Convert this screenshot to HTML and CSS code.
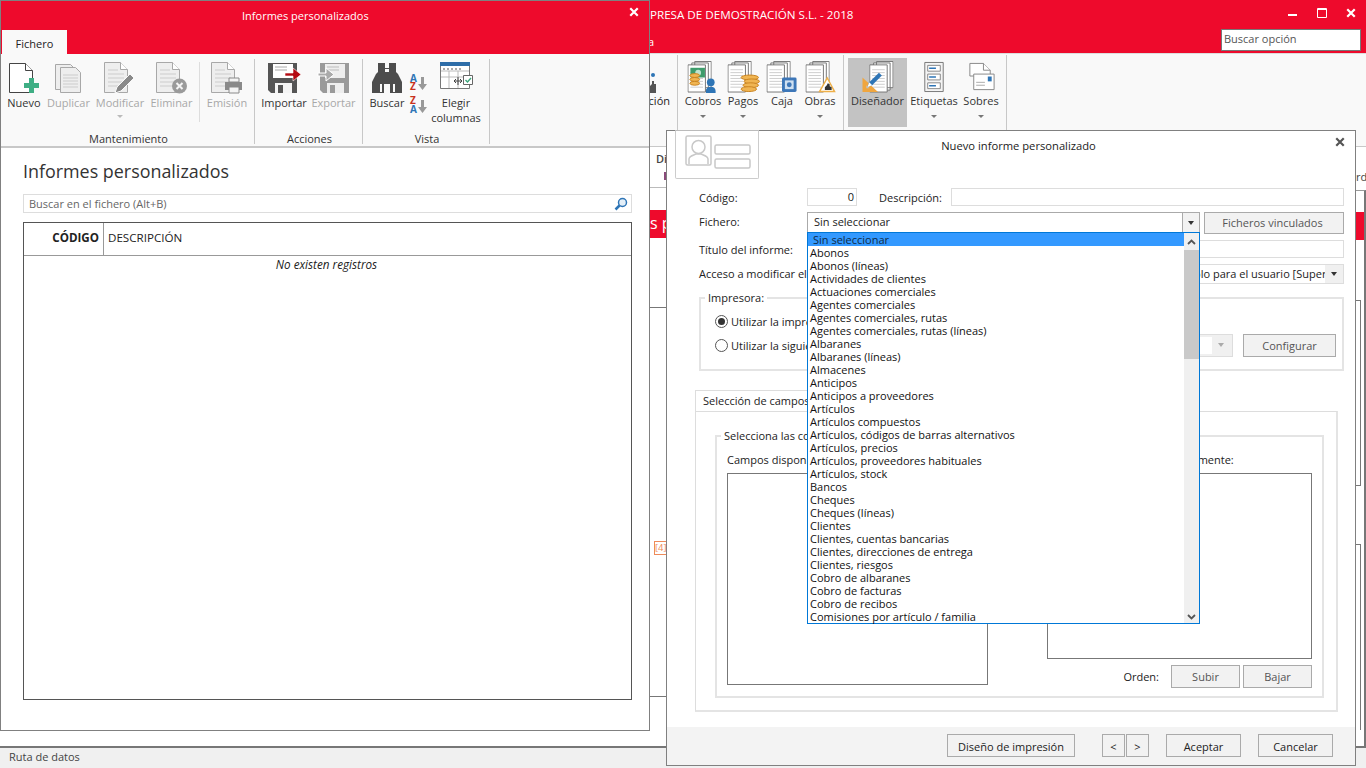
FILE: index.html
```html
<!DOCTYPE html>
<html lang="es">
<head>
    <meta charset="UTF-8">
    <meta name="viewport" content="width=device-width, initial-scale=1.0">
    <title>Informes personalizados</title>
    <link rel="stylesheet" href="styles.css">
</head>
<body>

    <!-- Shared icon parts -->
    <svg class="defs" width="0" height="0" aria-hidden="true">
        <symbol id="stack" viewBox="0 0 25 33">
            <path d="M7.5.5h17v27h-17zM4.5 2h17v28h-17z" fill="#fff" stroke="#777"/>
            <path d="M.5 4h18v28H.5z" fill="#fff" stroke="#777"/>
            <path d="M3 9h13M3 12h13M3 15h13M3 18h13M3 21h13M3 24h13M3 27h13" stroke="#ccc"/>
        </symbol>
        <symbol id="doc" viewBox="0 0 24 31">
            <path d="M.5.5h16l7 7v23H.5z" fill="#eee" stroke="#a8a8a8"/>
            <path d="M16.5.5v7h7" fill="#fff" stroke="#a8a8a8"/>
            <path d="M4 8h10M4 12h16M4 16h16M4 20h16M4 24h16" stroke="#ccc"/>
        </symbol>
        <symbol id="close" viewBox="0 0 12 12">
            <path d="M1.5 1.500l9 9M10.500 1.500l-9 9" fill="none" stroke="currentColor" stroke-width="2.600"/>
        </symbol>
    </svg>

    <!-- Main window, behind the other two -->
    <div class="app">
        <div class="app-top">
            <div class="app-title-row">
                <div class="app-title">EMPRESA DE DEMOSTRACIÓN S.L. - 2018</div>
                <div class="win-controls">
                    <svg class="ctl-min" width="10" height="2" viewBox="0 0 10 2"><path d="M0 0h9v2H0z" fill="#fff"/></svg>
                    <svg width="10" height="10" viewBox="0 0 10 10"><path d="M.5.5h9v9h-9zM.5 1.500h9" fill="none" stroke="#fff"/></svg>
                    <svg width="10" height="10"><use href="#close"/></svg>
                </div>
            </div>
            <div class="app-menu-row">
                <div class="app-menu">Ayuda</div>
                <div class="app-search">Buscar opción</div>
            </div>
        </div>

        <div class="app-ribbon">
            <div class="rgroup rg-hidden">
                <div class="rb-scrap">
                    <svg width="8" height="32" viewBox="0 0 8 32"><circle cx="3" cy="14" r="2" fill="#2e75b6"/><path d="M0 32v-7l2-2v-3h2v3h2v9z" fill="#555"/></svg>
                    <span>Facturación</span>
                </div>
            </div>
            <div class="rgroup rg-docs">
                <div class="rb">
                    <svg class="rb-ico" width="32" height="33" viewBox="0 0 32 33">
                        <use href="#stack" width="25" height="33"/>
                        <path d="M3 7h15v10H3z" fill="#3e9c6b"/><circle cx="11" cy="12" r="3" fill="#bfe3cf"/>
                        <ellipse cx="7.500" cy="15" rx="5" ry="2" fill="#f0b552" stroke="#c98320"/><ellipse cx="7.500" cy="19" rx="5" ry="2" fill="#f0b552" stroke="#c98320"/><ellipse cx="7.500" cy="23" rx="5" ry="2" fill="#f0b552" stroke="#c98320"/>
                        <circle cx="24" cy="22" r="4" fill="#2e75b6"/><path d="M19 33v-2c0-3 2-4.500 5-4.500s5 1.500 5 4.500v2z" fill="#2e75b6"/>
                    </svg>
                    <span>Cobros</span><i class="caret"></i>
                </div>
                <div class="rb">
                    <svg class="rb-ico" width="33" height="33" viewBox="0 0 33 33">
                        <use href="#stack" width="25" height="33"/>
                        <ellipse cx="23" cy="17" rx="9" ry="2.500" fill="#f0b552" stroke="#c98320"/><ellipse cx="25" cy="21" rx="8" ry="2.500" fill="#f0b552" stroke="#c98320"/><ellipse cx="24" cy="25" rx="8" ry="2.500" fill="#f0b552" stroke="#c98320"/><ellipse cx="22" cy="29" rx="8" ry="2.500" fill="#f0b552" stroke="#c98320"/>
                    </svg>
                    <span>Pagos</span><i class="caret"></i>
                </div>
                <div class="rb">
                    <svg class="rb-ico" width="32" height="33" viewBox="0 0 32 33">
                        <use href="#stack" width="25" height="33"/>
                        <rect x="16" y="17" width="15" height="15" rx="1.500" fill="#3d77b8"/><rect x="19" y="20" width="9" height="9" fill="#cfe0f1"/><circle cx="23.500" cy="24.500" r="2.500" fill="#3d77b8"/>
                    </svg>
                    <span>Caja</span>
                </div>
                <div class="rb">
                    <svg class="rb-ico" width="31" height="33" viewBox="0 0 31 33">
                        <use href="#stack" width="25" height="33"/>
                        <path d="M22.500 17.500l7.500 14H14.500z" fill="#fff" stroke="#eeb04a" stroke-width="1.500"/><path d="M20 30v-3l2-2 1-2 2 1v2l2 1v3z" fill="#333"/>
                    </svg>
                    <span>Obras</span><i class="caret"></i>
                </div>
            </div>
            <div class="rgroup rg-design">
                <div class="rb rb-active">
                    <svg class="rb-ico" width="33" height="33" viewBox="0 0 33 33">
                        <use href="#stack" x="8" width="25" height="33"/>
                        <path d="M1 17v15h16z" fill="#f0a63f"/><path d="M5 25v3h3z" fill="#c3c3c3"/>
                        <path d="M6 27l2-5 10-10 3 3-10 10z" fill="#2e75b6"/><path d="M6 27l2-5 3 3z" fill="#fff"/>
                    </svg>
                    <span>Diseñador</span>
                </div>
                <div class="rb">
                    <svg class="rb-ico" width="20" height="33" viewBox="0 0 20 33">
                        <path d="M.5 1.500h19v30H.5z" fill="#f4f4f4" stroke="#777"/>
                        <path d="M3.500 4.500h13v6h-13zM3.500 13.500h13v6h-13zM3.500 22.500h13v6h-13z" fill="#fff" stroke="#888"/>
                        <path d="M5 7.500h7M5 16.500h7M5 25.500h7" stroke="#2e75b6" stroke-width="1.500"/>
                    </svg>
                    <span>Etiquetas</span><i class="caret"></i>
                </div>
                <div class="rb">
                    <svg class="rb-ico" width="27" height="33" viewBox="0 0 27 33">
                        <path d="M1.500 2.500h14l7 7v6h-21z" fill="#fff" stroke="#888"/><path d="M15.500 2.500v7h7" fill="#fff" stroke="#888"/>
                        <path d="M5.500 13.500h21v16h-21z" fill="#fff" stroke="#888"/><path d="M8 22h9M8 25h9" stroke="#aaa"/><path d="M20 16h4v5h-4z" fill="#2e75b6"/>
                    </svg>
                    <span>Sobres</span><i class="caret"></i>
                </div>
            </div>
        </div>

        <div class="app-body">
            <div class="scrap-left">
                <div class="scrap-head">Di</div>
                <div class="scrap-mark"><i></i></div>
                <div class="scrap-banner">s p</div>
                <div class="scrap-panel">
                    <div class="scrap-tag">[4]</div>
                </div>
            </div>
            <div class="scrap-right">
                <div class="scrap-head">rd</div>
                <div class="scrap-box">
                    <div class="scrap-red"></div>
                    <div class="scrap-nest scrap-nest1"></div>
                    <div class="scrap-nest scrap-nest2"></div>
                </div>
            </div>
        </div>

        <div class="statusbar">Ruta de datos</div>
    </div>

    <!-- Informes personalizados window -->
    <div class="win-list">
        <div class="win-head">
            <div class="win-title-row">
                <div class="win-title">Informes personalizados</div>
                <svg class="win-close" width="10" height="10"><use href="#close"/></svg>
            </div>
            <div class="win-tab">Fichero</div>
        </div>

        <div class="ribbon">
            <div class="group g-mant">
                <div class="group-items">
                    <div class="rbtn">
                        <svg width="32" height="32" viewBox="0 0 32 32">
                            <path d="M1.500 1.500h16l7 7v22h-23z" fill="#fff" stroke="#444"/><path d="M17.500 1.500v7h7" fill="#fff" stroke="#444"/>
                            <path d="M22 18h5v5h5v5h-5v5h-5v-5h-5v-5h5z" transform="translate(-1 -2)" fill="#3fae84"/>
                        </svg>
                        <span>Nuevo</span>
                    </div>
                    <div class="rbtn off">
                        <svg width="27" height="32" viewBox="0 0 27 32">
                            <path d="M.5 2.500h15l5 5v20H.5z" fill="#eee" stroke="#a8a8a8"/>
                            <path d="M5.500 5.500h15l5 5v20h-20z" fill="#eee" stroke="#a8a8a8"/>
                            <path d="M8 13h15M8 16h15M8 19h15M8 22h15M8 25h15" stroke="#ccc"/>
                        </svg>
                        <span>Duplicar</span>
                    </div>
                    <div class="rbtn off">
                        <svg width="32" height="32" viewBox="0 0 32 32">
                            <use href="#doc" width="24" height="31"/>
                            <path d="M11 31l2-6 13-13 4 4-13 13z" fill="#8a8a8a" stroke="#f9f9f9"/>
                        </svg>
                        <span>Modificar</span><i class="caret off"></i>
                    </div>
                    <div class="rbtn off">
                        <svg width="32" height="32" viewBox="0 0 32 32">
                            <use href="#doc" width="24" height="31"/>
                            <circle cx="23.500" cy="24" r="7.500" fill="#9a9a9a"/>
                            <path d="M20.500 21l6 6M26.500 21l-6 6" stroke="#f4f4f4" stroke-width="2"/>
                        </svg>
                        <span>Eliminar</span>
                    </div>
                    <div class="rsep"></div>
                    <div class="rbtn off">
                        <svg width="32" height="32" viewBox="0 0 32 32">
                            <use href="#doc" width="24" height="31"/>
                            <path d="M18 16h10v4H18z" fill="#f4f4f4" stroke="#8a8a8a"/>
                            <path d="M14 20h17v8H14z" fill="#8a8a8a"/>
                            <path d="M18 25h10v6H18z" fill="#f4f4f4" stroke="#8a8a8a"/>
                        </svg>
                        <span>Emisión</span>
                    </div>
                </div>
                <div class="group-label">Mantenimiento</div>
            </div>

            <div class="group g-acc">
                <div class="group-items">
                    <div class="rbtn">
                        <svg width="33" height="32" viewBox="0 0 33 32">
                            <path d="M0 1h29v30H3l-3-3z" fill="#555"/><path d="M5 2h20v14H5z" fill="#fff"/>
                            <path d="M7 5h12M7 8h12" stroke="#aaa"/><path d="M7 21h17v10H7z" fill="#f4f4f4"/><path d="M10 23h5v8h-5z" fill="#555"/>
                            <path d="M17 11h8V6l8 6.500-8 6.500v-5h-8z" fill="#b40a12" stroke="#fff" stroke-width=".6"/>
                        </svg>
                        <span>Importar</span>
                    </div>
                    <div class="rbtn off">
                        <svg width="33" height="32" viewBox="0 0 33 32">
                            <path d="M3 1h29v30H6l-3-3z" fill="#9a9a9a"/><path d="M8 2h20v14H8z" fill="#eee"/>
                            <path d="M10 5h12M10 8h12" stroke="#bbb"/><path d="M10 21h17v10H10z" fill="#eee"/><path d="M13 23h5v8h-5z" fill="#9a9a9a"/>
                            <path d="M1 11h8V6l8 6.500-8 6.500v-5H1z" fill="#aaa" stroke="#fff"/>
                        </svg>
                        <span>Exportar</span>
                    </div>
                </div>
                <div class="group-label">Acciones</div>
            </div>

            <div class="group g-vista">
                <div class="group-items">
                    <div class="rbtn">
                        <svg width="30" height="32" viewBox="0 0 30 32">
                            <path d="M6 1h7v9h4V1h7v9l2 2 4 8v11H18v-9h-6v9H0V20l4-8 2-2z" fill="#4d4d4d"/>
                            <path d="M8 22h2v8H8zM21 22h2v8h-2z" fill="#f9f9f9"/>
                            <path d="M13 6h4v1h-4z" fill="#4d4d4d"/>
                        </svg>
                        <span>Buscar</span>
                    </div>
                    <div class="rsort">
                        <svg width="18" height="40" viewBox="0 0 18 40">
                            <text x="1" y="8" class="sort-a">A</text><text x="1" y="16" class="sort-z">Z</text>
                            <text x="1" y="30" class="sort-z">Z</text><text x="1" y="39" class="sort-a">A</text>
                            <path d="M12 3h3v7h3l-4.500 6-4.500-6h3zM12 26h3v7h3l-4.500 6-4.500-6h3z" fill="#999"/>
                        </svg>
                    </div>
                    <div class="rbtn">
                        <svg width="33" height="32" viewBox="0 0 33 32">
                            <path d="M.5.500h29v26H.5z" fill="#fff" stroke="#777"/><path d="M0 0h30v4H0z" fill="#2e6da8"/>
                            <path d="M1 9h28M1 15h28M9 9v17M18 9v17" stroke="#bbb" fill="none"/><path d="M3 7h2M7 7h2M11 7h2M15 7h2M19 7h2" stroke="#555"/>
                            <path d="M14 19h8M14 19l2-2M14 19l2 2M22 19l-2-2M22 19l-2 2M18 15v8" stroke="#444" fill="none"/>
                            <path d="M23.500 13.500h9v9h-9z" fill="#fff" stroke="#666"/><path d="M25.500 18l2 2 3.500-4" fill="none" stroke="#3aa57a" stroke-width="1.400"/>
                        </svg>
                        <span>Elegir<br>columnas</span>
                    </div>
                </div>
                <div class="group-label">Vista</div>
            </div>
        </div>

        <div class="win-content">
            <div class="win-heading">Informes personalizados</div>
            <div class="win-search">
                <span>Buscar en el fichero (Alt+B)</span>
                <svg width="14" height="14" viewBox="0 0 14 14"><circle cx="8.500" cy="5.500" r="4" fill="#e4eff8" stroke="#2e75b6" stroke-width="1.500"/><path d="M5.500 8.500L1.500 12.500" stroke="#2e75b6" stroke-width="2.500"/></svg>
            </div>
            <div class="grid">
                <div class="grid-head">
                    <div class="col-code">CÓDIGO</div>
                    <div class="col-desc">DESCRIPCIÓN</div>
                </div>
                <div class="grid-empty">No existen registros</div>
            </div>
        </div>
    </div>

    <!-- Nuevo informe personalizado dialog -->
    <div class="dlg">
        <div class="dlg-head">
            <div class="dlg-tab">
                <svg width="66" height="35" viewBox="0 0 66 35">
                    <rect x="1" y="1" width="25" height="29" rx="1.500" fill="#fff" stroke="#c8c8c8" stroke-width="1.500"/>
                    <circle cx="13.500" cy="12" r="6.500" fill="#fff" stroke="#c8c8c8" stroke-width="1.500"/>
                    <path d="M4 29v-5c0-3 5-4 7-5h5c2 1 7 2 7 5v5" fill="none" stroke="#c8c8c8" stroke-width="1.500"/>
                    <rect x="30" y="10" width="35" height="9" rx="1.500" fill="#fff" stroke="#c8c8c8" stroke-width="1.500"/>
                    <rect x="30" y="24" width="35" height="9" rx="1.500" fill="#fff" stroke="#c8c8c8" stroke-width="1.500"/>
                </svg>
            </div>
            <div class="dlg-title">Nuevo informe personalizado</div>
            <svg class="dlg-close" width="10" height="10"><use href="#close"/></svg>
        </div>

        <div class="form">
            <div class="frow r-code">
                <label class="flabel">Código:</label>
                <div class="input in-code">0</div>
                <label class="flabel-inline">Descripción:</label>
                <div class="input grow"></div>
            </div>
            <div class="frow r-file">
                <label class="flabel">Fichero:</label>
                <div class="combo-wrap">
                    <div class="combo">
                        <span>Sin seleccionar</span>
                        <div class="combo-btn"><i class="tri"></i></div>
                    </div>
                    <div class="dropdown">
                        <ul class="dropdown-list">
                            <li class="sel">Sin seleccionar</li>
                            <li>Abonos</li>
                            <li>Abonos (líneas)</li>
                            <li>Actividades de clientes</li>
                            <li>Actuaciones comerciales</li>
                            <li>Agentes comerciales</li>
                            <li>Agentes comerciales, rutas</li>
                            <li>Agentes comerciales, rutas (líneas)</li>
                            <li>Albaranes</li>
                            <li>Albaranes (líneas)</li>
                            <li>Almacenes</li>
                            <li>Anticipos</li>
                            <li>Anticipos a proveedores</li>
                            <li>Artículos</li>
                            <li>Artículos compuestos</li>
                            <li>Artículos, códigos de barras alternativos</li>
                            <li>Artículos, precios</li>
                            <li>Artículos, proveedores habituales</li>
                            <li>Artículos, stock</li>
                            <li>Bancos</li>
                            <li>Cheques</li>
                            <li>Cheques (líneas)</li>
                            <li>Clientes</li>
                            <li>Clientes, cuentas bancarias</li>
                            <li>Clientes, direcciones de entrega</li>
                            <li>Clientes, riesgos</li>
                            <li>Cobro de albaranes</li>
                            <li>Cobro de facturas</li>
                            <li>Cobro de recibos</li>
                            <li>Comisiones por artículo / familia</li>
                        </ul>
                        <div class="sbar">
                            <svg class="sbar-arrow" width="9" height="6" viewBox="0 0 9 6"><path d="M1 5l3.500-3.500L8 5" fill="none" stroke="#555" stroke-width="1.800"/></svg>
                            <div class="sbar-thumb"></div>
                            <svg class="sbar-arrow sbar-down" width="9" height="6" viewBox="0 0 9 6"><path d="M1 1l3.500 3.500L8 1" fill="none" stroke="#555" stroke-width="1.800"/></svg>
                        </div>
                    </div>
                </div>
                <div class="btn btn-linked">Ficheros vinculados</div>
            </div>
            <div class="frow r-title">
                <label class="flabel">Título del informe:</label>
                <div class="input grow"></div>
            </div>
            <div class="frow r-access">
                <label class="flabel flabel-wide">Acceso a modificar el informe:</label>
                <div class="combo-flat">
                    <span>Solo para el usuario [Supervisor]</span>
                    <div class="combo-flat-btn"><i class="tri"></i></div>
                </div>
            </div>

            <fieldset class="fset fset-printer">
                <legend>Impresora:</legend>
                <div class="radio-row">
                    <i class="radio on"></i><span>Utilizar la impresora predeterminada</span>
                </div>
                <div class="radio-row r2">
                    <i class="radio"></i><span>Utilizar la siguiente impresora:</span>
                    <div class="printer-combo"><div class="printer-field"></div><i class="tri tri-off"></i></div>
                    <div class="btn btn-config">Configurar</div>
                </div>
            </fieldset>
        </div>

        <div class="tabs">
            <div class="tab">Selección de campos</div>
            <div class="tab-panel">
                <fieldset class="fset fset-cols">
                    <legend>Selecciona las columnas</legend>
                    <div class="cols">
                        <div class="col-left">
                            <div class="col-cap">Campos disponibles:</div>
                            <div class="listbox lb-left"></div>
                        </div>
                        <div class="col-mid"><div class="btn btn-move"></div></div>
                        <div class="col-right">
                            <div class="col-cap">Campos a imprimir ordenadamente:</div>
                            <div class="listbox lb-right"></div>
                            <div class="order-row">
                                <span class="order-label">Orden:</span>
                                <div class="btn btn-order">Subir</div>
                                <div class="btn btn-order">Bajar</div>
                            </div>
                        </div>
                    </div>
                </fieldset>
            </div>
        </div>

        <div class="dlg-foot">
            <div class="btn btn-print">Diseño de impresión</div>
            <div class="btn btn-nav">&lt;</div>
            <div class="btn btn-nav btn-nav2">&gt;</div>
            <div class="btn btn-ok">Aceptar</div>
            <div class="btn btn-ok btn-cancel">Cancelar</div>
        </div>
    </div>

</body>
</html>
```

FILE: styles.css
```css
/* General */
html, body {
    margin: 0;
    padding: 0;
    height: 100%;
    overflow: hidden;
}
body {
    position: relative;
    width: 1366px;
    height: 768px;
    background-color: #fff;
    font-family: "Open Sans", "Noto Sans", sans-serif;
    font-size: 11px;
    line-height: 15px;
    color: #222;
}
.defs {
    position: absolute;
}
svg {
    display: block;
    flex: none;
}

/* Main window behind */
.app {
    display: flex;
    flex-direction: column;
    height: 768px;
}
.app-top {
    height: 53px;
    background-color: #ee0a2c;
    color: #fff;
}
.app-title-row {
    display: flex;
    justify-content: space-between;
    height: 29px;
    padding-left: 633px;
}
.app-title {
    padding-top: 7px;
    font-size: 11.65px;
}
.win-controls {
    display: flex;
    align-items: center;
    gap: 19px;
    padding: 0 10px 0 0;
    height: 26px;
}
.ctl-min {
    margin-top: 4px;
}
.app-menu-row {
    display: flex;
    justify-content: space-between;
}
.app-menu {
    width: 654px;
    text-align: right;
    padding-top: 5px;
}
.app-search {
    width: 136px;
    height: 20px;
    margin-right: 5px;
    padding-left: 2px;
    border: 1px solid #777;
    background-color: #fff;
    color: #555;
    line-height: 18px;
}

/* Main ribbon */
.app-ribbon {
    display: flex;
    height: 94px;
    padding-top: 1px;
    padding-left: 650px;
    box-sizing: border-box;
    background-color: #f9f9f9;
    border-bottom: 1px solid #c8c8c8;
    border-top: 1px solid #ddd;
}
.rgroup {
    display: flex;
    height: 89px;
    padding-top: 3px;
    box-sizing: border-box;
    border-right: 1px solid #c8c8c8;
}
.rg-hidden {
    width: 28px;
    justify-content: flex-end;
}
.rb-scrap {
    display: flex;
    flex-direction: column;
    align-items: flex-start;
    width: 20px;
    margin-right: 7px;
    padding-top: 3px;
    white-space: nowrap;
}
.rb-scrap span {
    direction: rtl;
    width: 20px;
    height: 15px;
}
.rg-docs {
    display: grid;
    grid-template-columns: 40px 40px 38px 38px;
    padding-left: 5px;
    width: 166px;
}
.rg-design {
    display: grid;
    grid-template-columns: 59px 54px 40px;
    grid-auto-rows: 69px;
    padding-left: 4px;
    width: 163px;
}
.rb {
    display: flex;
    flex-direction: column;
    align-items: center;
    height: 69px;
    padding-top: 3px;
    box-sizing: border-box;
    color: #333;
}
.rb-ico {
    height: 32px;
}
.rb-active {
    background-color: #c3c3c3;
}
.caret {
    display: block;
    width: 0;
    height: 0;
    margin-top: 7px;
    border-left: 3.5px solid transparent;
    border-right: 3.5px solid transparent;
    border-top: 3px solid #777;
}
.caret.off {
    border-top-color: #bbb;
}

/* Bits of the document still visible beside the dialog */
.app-body {
    display: flex;
    justify-content: space-between;
    flex: 1;
    padding-left: 650px;
    min-height: 0;
}
.scrap-left {
    width: 16px;
    overflow: hidden;
}
.scrap-right {
    width: 10px;
    overflow: hidden;
}
.scrap-head {
    height: 27px;
    padding: 4px 0 0 6px;
    box-sizing: border-box;
    font-weight: 600;
    color: #444;
    white-space: nowrap;
}
.scrap-right .scrap-head {
    height: 43px;
    padding: 22px 0 0 0;
    font-weight: 400;
}
.scrap-mark {
    height: 16px;
    box-sizing: border-box;
    border-bottom: 1px solid #bbb;
}
.scrap-mark i {
    display: block;
    width: 2px;
    height: 8px;
    margin: -2px 0 0 14px;
    background-color: #8a4a7a;
}
.scrap-banner {
    height: 28px;
    margin-top: 22px;
    padding-top: 1px;
    box-sizing: border-box;
    background-color: #ee0a2c;
    color: #fff;
    font-size: 16px;
    line-height: 24px;
    white-space: nowrap;
}
.scrap-panel {
    height: 390px;
    margin-top: 69px;
    padding-top: 233px;
    box-sizing: border-box;
    border-top: 1px solid #777;
    border-bottom: 1px solid #777;
}
.scrap-tag {
    margin-left: 4px;
    width: 13px;
    height: 14px;
    line-height: 12px;
    font-size: 9.5px;
    border: 1px solid #ee8a5a;
    color: #ee8a5a;
    box-sizing: border-box;
    white-space: nowrap;
}
.scrap-box {
    height: 556px;
    width: 10px;
    box-sizing: border-box;
    padding-top: 21px;
    border-top: 1px solid #999;
    border-right: 2px solid #777;
}
.scrap-red {
    height: 28px;
    background-color: #ee0a2c;
}
.scrap-nest {
    width: 5px;
    box-sizing: border-box;
    border: 1px solid #777;
    border-left: 0;
}
.scrap-nest1 {
    height: 186px;
    margin-top: 60px;
}
.scrap-nest2 {
    height: 186px;
    margin-top: 58px;
    border-bottom: 0;
}
.statusbar {
    height: 22px;
    padding-left: 9px;
    box-sizing: border-box;
    border-top: 2px solid #777;
    background-color: #f0f0f0;
    color: #444;
    line-height: 18px;
}

/* Informes personalizados window */
.win-list {
    position: absolute;
    left: 0;
    top: 0;
    width: 650px;
    height: 731px;
    box-sizing: border-box;
    border: 1px solid #808080;
    background-color: #fff;
}
.win-head {
    height: 53px;
    background-color: #ee0a2c;
    color: #fff;
}
.win-title-row {
    display: flex;
    justify-content: space-between;
    height: 29px;
}
.win-title {
    padding: 7px 0 0 241px;
}
.win-close {
    margin: 6px 10px 0 0;
}
.win-tab {
    width: 65px;
    height: 24px;
    margin-left: 1px;
    box-sizing: border-box;
    background-color: #f9f9f9;
    color: #222;
    text-align: center;
    line-height: 27px;
}

/* Ribbon of the window */
.ribbon {
    display: flex;
    height: 94px;
    padding-top: 5px;
    box-sizing: border-box;
    background-color: #f9f9f9;
    border-bottom: 2px solid #c8c8c8;
}
.group {
    display: flex;
    flex-direction: column;
    justify-content: space-between;
    height: 85px;
    box-sizing: border-box;
    border-right: 1px solid #c8c8c8;
}
.g-mant {
    width: 254px;
}
.g-acc {
    width: 108px;
}
.g-vista {
    width: 127px;
}
.group-items {
    display: grid;
    align-items: start;
    padding-top: 3px;
}
.g-mant .group-items {
    grid-template-columns: 46px 43px 60px 43px 12px 44px;
}
.g-acc .group-items {
    grid-template-columns: 58px 41px;
}
.g-vista .group-items {
    grid-template-columns: 48px 14px 62px;
}
.group-label {
    margin: 0 -2px -2px 0;
    text-align: center;
    color: #333;
}
.rbtn {
    display: flex;
    flex-direction: column;
    align-items: center;
    text-align: center;
    color: #333;
    white-space: nowrap;
}
.rbtn svg {
    height: 32px;
}
.rbtn span {
    margin-top: 1px;
}
.rbtn .caret {
    margin-top: 5px;
}
.rbtn.off {
    color: #a8a8a8;
}
.rsep {
    width: 1px;
    height: 60px;
    margin: 0 auto;
    background-color: #ddd;
}
.rsort {
    display: flex;
    justify-content: center;
    padding-top: 12px;
    margin: 0 -4px;
}
.sort-a, .sort-z {
    font-size: 10px;
    font-weight: 700;
}
.sort-a {
    fill: #2e75b6;
}
.sort-z {
    fill: #c8321e;
}

/* Window content */
.win-content {
    padding: 5px 17px 0 22px;
}
.win-heading {
    font-size: 17.9px;
    line-height: 36px;
    color: #333;
}
.win-search {
    display: flex;
    justify-content: space-between;
    align-items: center;
    height: 19px;
    margin-top: 5px;
    padding: 0 3px 0 5px;
    box-sizing: border-box;
    border: 1px solid #ddd;
    color: #666;
}
.grid {
    height: 478px;
    margin-top: 9px;
    box-sizing: border-box;
    border: 1px solid #555;
}
.grid-head {
    display: flex;
    height: 32px;
    border-bottom: 1px solid #999;
    line-height: 30px;
    font-size: 11.6px;
}
.col-code {
    width: 75px;
    padding-right: 4px;
    text-align: right;
    font-weight: 700;
    border-right: 1px solid #999;
}
.col-desc {
    padding-left: 4px;
}
.grid-empty {
    padding-top: 1px;
    text-align: center;
    font-style: italic;
    font-size: 11.7px;
    margin-left: -2px;
}

/* Dialog */
.dlg {
    position: absolute;
    left: 666px;
    top: 130px;
    width: 690px;
    height: 636px;
    box-sizing: border-box;
    border: 1px solid #808080;
    background-color: #fff;
    display: flex;
    flex-direction: column;
}
.dlg-head {
    display: flex;
    height: 57px;
    flex: none;
}
.dlg-tab {
    width: 84px;
    height: 49px;
    margin: -1px 0 0 8px;
    padding: 4px 0 0 9px;
    box-sizing: border-box;
    border: 1px solid #ccc;
    border-top: 1px solid #bbb;
    border-radius: 0 0 2px 2px;
}
.dlg-title {
    width: 519px;
    padding-top: 7px;
    text-align: center;
    font-size: 11.2px;
}
.dlg-close {
    margin: 6px 0 0 57px;
    color: #555;
}

/* Form */
.form {
    padding: 0 11px 0 32px;
}
.frow {
    display: flex;
    align-items: flex-start;
    line-height: 18px;
}
.r-code {
    height: 18px;
}
.r-file {
    height: 22px;
    margin-top: 6px;
}
.r-title {
    height: 18px;
    margin-top: 6px;
}
.r-access {
    height: 20px;
    margin-top: 6px;
}
.flabel {
    width: 108px;
    flex: none;
    padding-top: 1px;
    white-space: nowrap;
}
.flabel-wide {
    width: 485px;
    line-height: 20px;
    padding-top: 0;
}
.flabel-inline {
    padding: 1px 9px 0 22px;
    white-space: nowrap;
}
.input {
    height: 18px;
    box-sizing: border-box;
    border: 1px solid #ddd;
    background-color: #fff;
    line-height: 15px;
}
.in-code {
    width: 50px;
    flex: none;
    padding-right: 2px;
    text-align: right;
}
.grow {
    flex: 1;
}
.combo-wrap {
    position: relative;
    width: 393px;
    flex: none;
}
.combo {
    display: flex;
    justify-content: space-between;
    height: 21px;
    padding-left: 6px;
    box-sizing: border-box;
    border: 1px solid #aaa;
    line-height: 17px;
}
.combo-btn {
    display: flex;
    align-items: center;
    justify-content: center;
    width: 16px;
    border-left: 1px solid #aaa;
    background-color: #f2f2f2;
}
.tri {
    display: block;
    width: 0;
    height: 0;
    border-left: 3.5px solid transparent;
    border-right: 3.5px solid transparent;
    border-top: 4px solid #333;
}
.tri-off {
    border-top-color: #aaa;
}

/* Dropdown over the form */
.dropdown {
    position: absolute;
    left: 0;
    top: 20px;
    z-index: 2;
    display: flex;
    width: 393px;
    height: 392px;
    box-sizing: border-box;
    border: 1px solid #0078d7;
    background-color: #fff;
}
.dropdown-list {
    flex: 1;
    margin: 0;
    padding: 0;
    list-style: none;
    line-height: 13px;
    color: #111;
}
.dropdown-list li {
    height: 13px;
    padding-left: 2px;
    white-space: nowrap;
}
.dropdown-list li.sel {
    padding-left: 5px;
    background-color: #3399ff;
    color: #102a45;
}
.sbar {
    display: flex;
    flex-direction: column;
    align-items: center;
    width: 15px;
    background-color: #f0f0f0;
}
.sbar-arrow {
    margin-top: 6px;
}
.sbar-thumb {
    width: 15px;
    height: 109px;
    margin-top: 5px;
    background-color: #c9c9c9;
}
.sbar-down {
    margin-top: auto;
    margin-bottom: 3px;
}

.btn {
    flex: none;
    box-sizing: border-box;
    border: 1px solid #aaa;
    background-color: #f2f2f2;
    text-align: center;
    color: #555;
}
.btn-linked {
    width: 140px;
    height: 22px;
    margin-left: 4px;
    padding-right: 3px;
    line-height: 20px;
}
.combo-flat {
    display: flex;
    justify-content: space-between;
    flex: 1;
    height: 20px;
    border: 1px solid #ddd;
    box-sizing: border-box;
    line-height: 18px;
    white-space: nowrap;
    color: #222;
    min-width: 0;
}
.combo-flat span {
    overflow: hidden;
    flex: 1;
    padding-left: 3px;
}
.combo-flat-btn {
    display: flex;
    flex: none;
    align-items: center;
    justify-content: center;
    width: 18px;
    background-color: #f0f0f0;
}

/* Group boxes */
.fset {
    margin: 0;
    padding: 0;
    border: 2px solid #e4e4e4;
    border-radius: 0;
    min-width: 0;
}
.fset legend {
    padding: 0 3px;
    line-height: 14px;
}
.fset-printer {
    margin-top: 7px;
    height: 80px;
    box-sizing: border-box;
    padding: 4px 6px 0 14px;
}
.fset-printer legend {
    margin-left: -10px;
}
.radio-row {
    display: flex;
    align-items: center;
    gap: 3px;
    height: 24px;
}
.radio {
    position: relative;
    display: block;
    width: 13px;
    height: 13px;
    box-sizing: border-box;
    border: 1px solid #555;
    border-radius: 50%;
}
.radio.on::after {
    content: "";
    position: absolute;
    left: 2px;
    top: 2px;
    width: 7px;
    height: 7px;
    border-radius: 50%;
    background-color: #333;
}
.printer-combo {
    display: flex;
    align-items: center;
    margin-left: auto;
    width: 150px;
    height: 23px;
    box-sizing: border-box;
    border: 1px solid #ddd;
    background-color: #f0f0f0;
}
.printer-field {
    width: 128px;
    height: 17px;
    margin-right: 6px;
    background-color: #fff;
}
.btn-config {
    width: 93px;
    height: 23px;
    margin-left: 7px;
    line-height: 21px;
}

/* Tabs */
.tabs {
    margin: 19px 17px 0 28px;
    flex: none;
}
.tab {
    width: 120px;
    height: 21px;
    padding-left: 7px;
    box-sizing: border-box;
    border: 1px solid #ddd;
    border-bottom: 0;
    line-height: 19px;
    white-space: nowrap;
}
.tab-panel {
    height: 301px;
    padding: 17px 12px 0 19px;
    box-sizing: border-box;
    border: 2px solid #e4e4e4;
    border-top: 1px solid #ddd;
    border-left: 1px solid #ddd;
}
.fset-cols {
    height: 269px;
    box-sizing: border-box;
    padding: 10px 10px 0 10px;
}
.fset-cols legend {
    margin-left: -6px;
}
.cols {
    display: flex;
}
.col-left {
    width: 261px;
    flex: none;
}
.col-mid {
    display: flex;
    align-items: flex-end;
    width: 59px;
    height: 166px;
    padding-left: 11px;
    box-sizing: border-box;
    flex: none;
}
.btn-move {
    width: 38px;
    height: 24px;
    background-color: #fff;
    border-color: #ccc;
}
.col-right {
    width: 265px;
    flex: none;
}
.col-cap {
    height: 20px;
    line-height: 14px;
    white-space: nowrap;
    overflow: visible;
}
.listbox {
    box-sizing: border-box;
    border: 1px solid #777;
}
.lb-left {
    height: 212px;
}
.lb-right {
    height: 186px;
}
.order-row {
    display: flex;
    align-items: center;
    gap: 3px;
    margin-top: 6px;
}
.order-label {
    margin-left: auto;
    margin-right: 9px;
}
.btn-order {
    width: 69px;
    height: 23px;
    line-height: 21px;
}

/* Dialog footer */
.dlg-foot {
    display: flex;
    align-items: flex-start;
    flex: 1;
    margin-top: 15px;
    padding: 7px 0 0 280px;
    background-color: #f3f3f3;
}
.dlg-foot .btn {
    height: 23px;
    line-height: 23px;
    color: #222;
}
.btn-print {
    width: 128px;
}
.btn-nav {
    width: 23px;
    margin-left: 27px;
}
.btn-nav2 {
    margin-left: 1px;
}
.btn-ok {
    width: 75px;
    margin-left: 17px;
}
.btn-cancel {
    margin-left: 17px;
}
```
